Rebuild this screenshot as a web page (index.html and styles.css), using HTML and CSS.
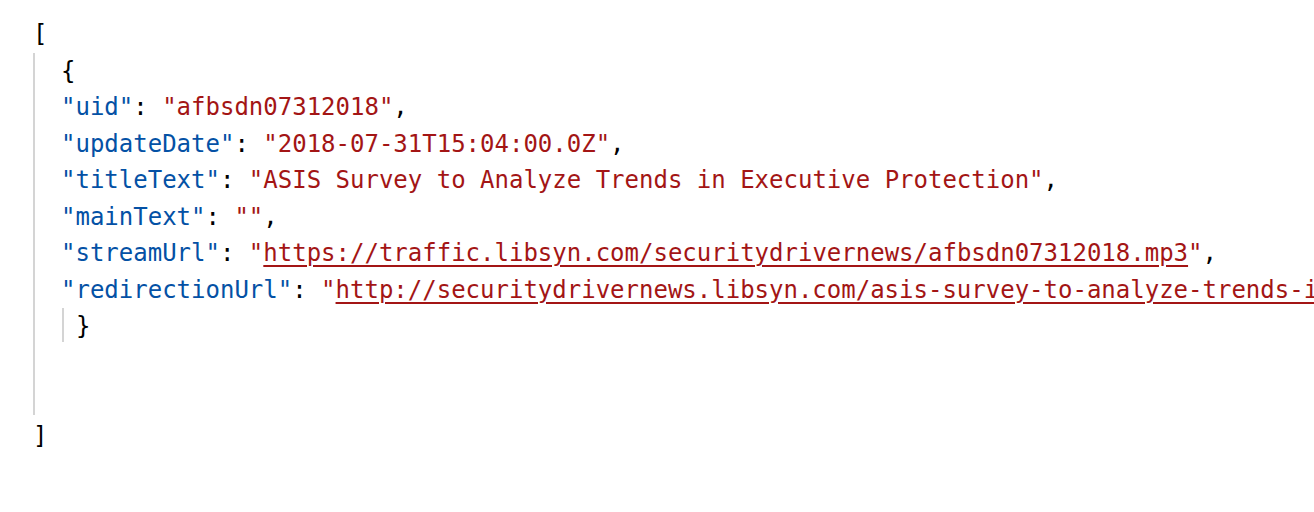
FILE: index.html
```html
<!DOCTYPE html>
<html>
<head>
<meta charset="utf-8">
<link rel="stylesheet" href="styles.css">
</head>
<body>
<div class="viewer">
  <div class="line">[</div>
  <div class="block outer">
    <div class="line">{</div>
    <div class="line"><span class="key">"uid"</span>: <span class="str">"afbsdn07312018"</span>,</div>
    <div class="line"><span class="key">"updateDate"</span>: <span class="str">"2018-07-31T15:04:00.0Z"</span>,</div>
    <div class="line"><span class="key">"titleText"</span>: <span class="str">"ASIS Survey to Analyze Trends in Executive Protection"</span>,</div>
    <div class="line"><span class="key">"mainText"</span>: <span class="str">""</span>,</div>
    <div class="line"><span class="key">"streamUrl"</span>: <span class="str">"<a class="url">https://traffic.libsyn.com/securitydrivernews/afbsdn07312018.mp3</a>"</span>,</div>
    <div class="line"><span class="key">"redirectionUrl"</span>: <span class="str">"<a class="url">http://securitydrivernews.libsyn.com/asis-survey-to-analyze-trends-in-executive-protection</a>"</span></div>
    <div class="block inner">
      <div class="line">}</div>
    </div>
  </div>
  <div class="line">]</div>
</div>
</body>
</html>
```
FILE: styles.css
```css
html, body {
  margin: 0;
  padding: 0;
  background: #ffffff;
  overflow: hidden;
}
.viewer {
  padding: 16px 0 0 33px;
  font-family: "DejaVu Sans Mono", "Liberation Mono", monospace;
  font-size: 24px;
  line-height: 36.5px;
  color: #000000;
}
.line {
  height: 36.5px;
  white-space: pre;
}
.block {
  border-left: 2px solid #d4d4d4;
}
.outer {
  padding-left: 26px;
  height: 362px;
  margin-bottom: 3px;
}
.inner {
  margin-left: 1px;
  padding-left: 12px;
  height: 34px;
}
.key {
  color: #0451a5;
}
.str {
  color: #a31515;
}
.url {
  color: #a31515;
  text-decoration: underline;
  text-decoration-thickness: 2px;
  text-underline-offset: 4px;
}
```
